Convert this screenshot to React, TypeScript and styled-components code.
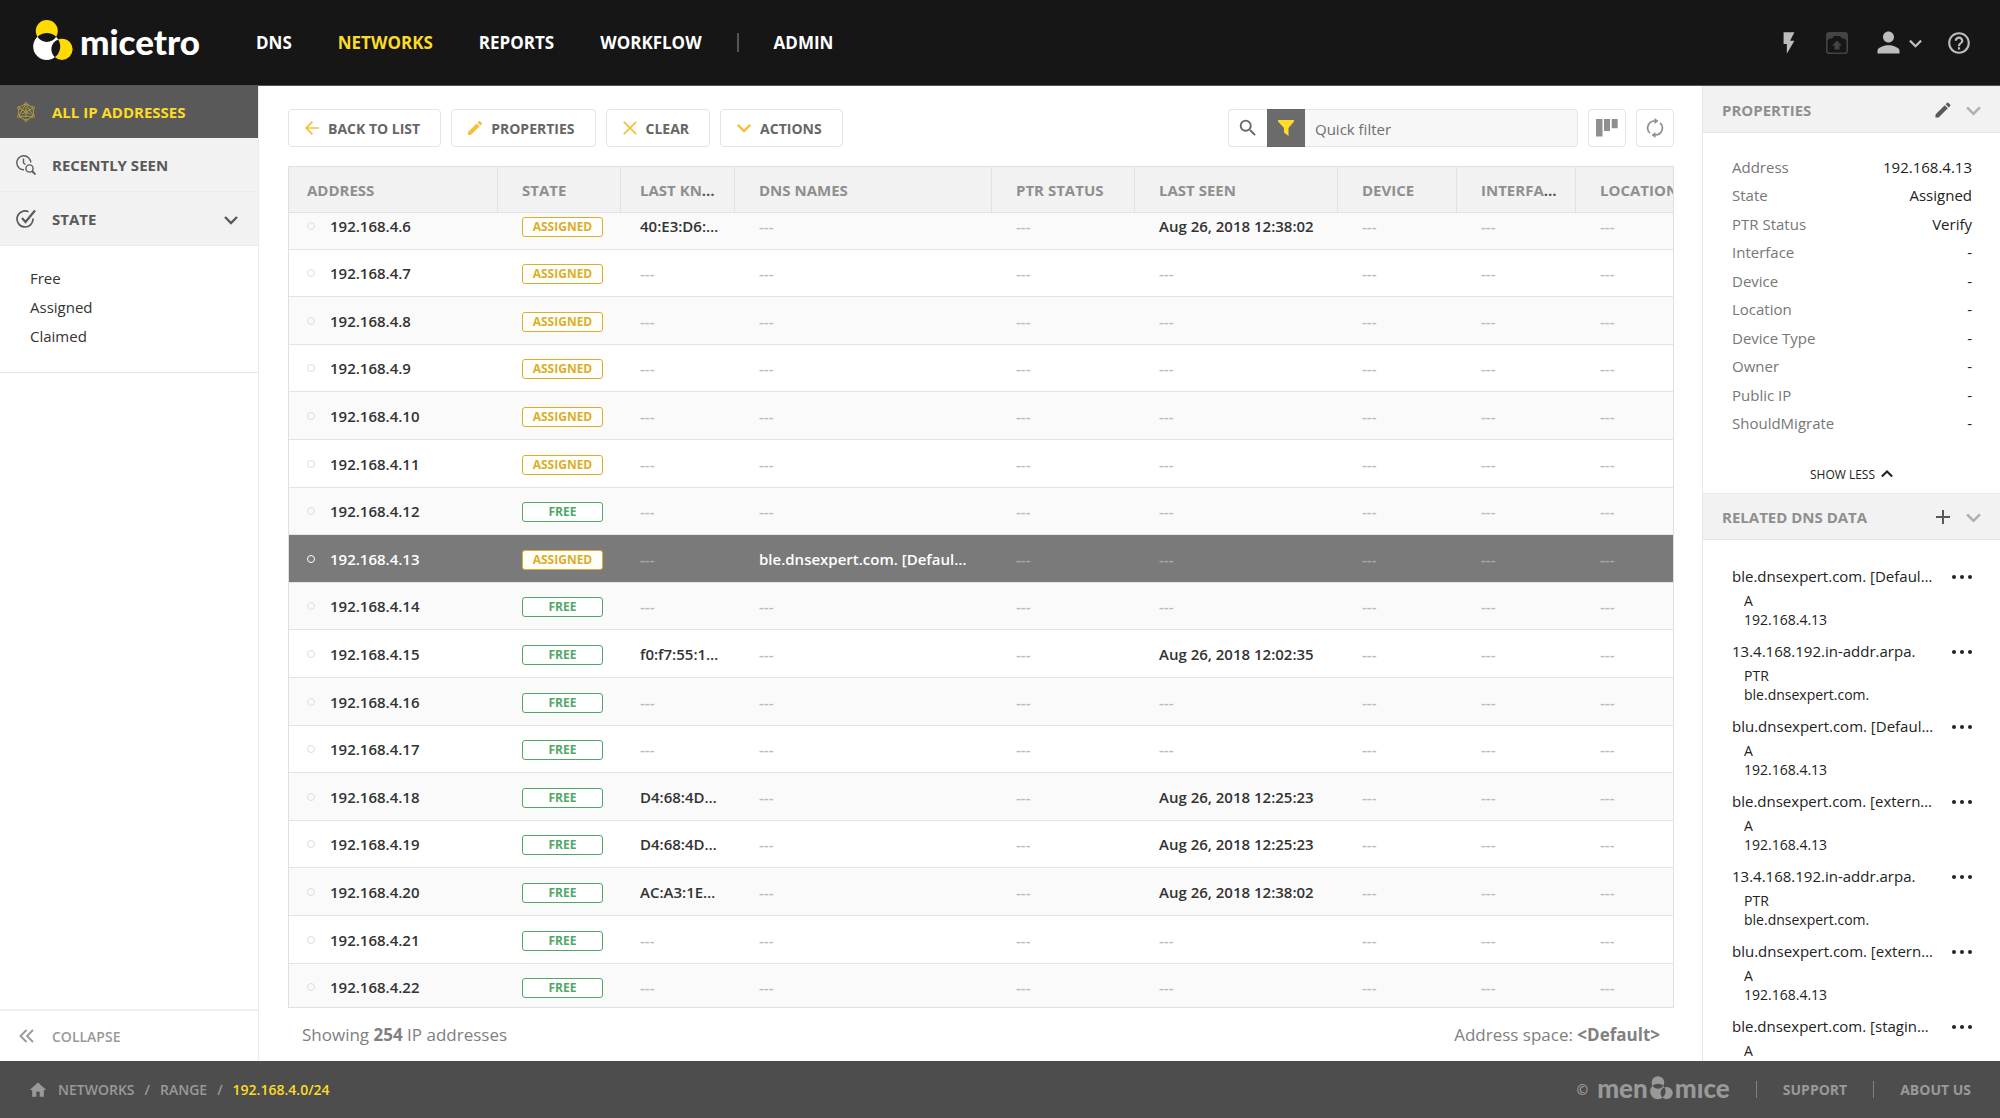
import React, { useLayoutEffect, useRef } from "react";
import styled, { createGlobalStyle, css } from "styled-components";
import { MdFlashOn, MdPerson, MdHelpOutline, MdEdit, MdHome, MdSearch, MdAdd } from "react-icons/md";

const Global = createGlobalStyle`
  * { box-sizing: border-box; }
  body { margin: 0; background: #fff; font-family: "Open Sans", "Noto Sans", sans-serif; font-size: 16px; color: #333; }
  button, input { font: inherit; color: inherit; }
  button { background: none; border: 0; padding: 0; cursor: pointer; }
  a { color: inherit; text-decoration: none; }
  ul, dl, dd { margin: 0; padding: 0; list-style: none; }
  h2 { margin: 0; }
  svg { display: block; flex: none; }
`;

const Page = styled.div`
  display: flex;
  flex-direction: column;
  height: 100vh;
`;

/* ---------- top bar ---------- */
const TopBar = styled.header`
  flex: none;
  display: flex;
  align-items: center;
  height: 86px;
  padding: 0 28px 0 33px;
  background: #161616;
  border-bottom: 1px solid #555;
  color: #fff;
`;
const Brand = styled.a`
  display: flex;
  align-items: center;
  gap: 7px;
  width: 223px;
  padding-bottom: 4px;
  font-family: "Lato", sans-serif;
  font-weight: 900;
  font-size: 35px;
  line-height: 40px;
`;
const Nav = styled.nav`
  flex: 1;
  display: flex;
  align-items: center;
  gap: 46px;
  font-size: 17px;
  font-weight: 700;
`;
const NavLink = styled.a<{ $on?: boolean }>`
  color: ${(p) => (p.$on ? "#fddb26" : "#fff")};
`;
const NavGroup = styled.div`
  display: flex;
  align-items: center;
  gap: 35px;
`;
const NavRule = styled.span`
  width: 2px;
  height: 19px;
  background: #555;
`;
const Tools = styled.div`
  display: flex;
  align-items: center;
  gap: 24px;
  color: #bdbdbd;
`;
const Tool = styled.button`
  display: flex;
  align-items: center;
  justify-content: center;
  gap: 4px;
  height: 40px;
`;

/* ---------- middle ---------- */
const Middle = styled.div`
  flex: 1;
  min-height: 0;
  display: grid;
  grid-template-columns: 259px minmax(0, 1fr) 298px;
`;
const Sidebar = styled.aside`
  display: flex;
  flex-direction: column;
  border-right: 1px solid #ebebeb;
`;
const SideItem = styled.button<{ $on?: boolean }>`
  display: flex;
  align-items: center;
  gap: 16px;
  height: 54px;
  padding: 0 20px 0 16px;
  border-bottom: 1px solid #ebebeb;
  background: #f2f2f2;
  color: #595959;
  font-size: 15px;
  font-weight: 700;
  text-align: left;
  ${(p) =>
    p.$on &&
    css`
      height: 52px;
      border-bottom: 0;
      background: #595959;
      color: #fddb26;
    `}
`;
const SideLabel = styled.span`
  flex: 1;
`;
const StateList = styled.ul`
  padding: 18px 30px 21px;
  border-bottom: 1px solid #e6e6e6;
  font-size: 15px;
  line-height: 29px;
`;
const Collapse = styled.button`
  display: flex;
  align-items: center;
  gap: 18px;
  height: 52px;
  margin-top: auto;
  padding: 0 19px;
  border-top: 2px solid #f0f0f0;
  color: #999;
  font-size: 14px;
  font-weight: 600;
`;

const Main = styled.main`
  display: flex;
  flex-direction: column;
  min-width: 0;
  min-height: 0;
  padding: 23px 28px 0 29px;
`;
const Toolbar = styled.div`
  display: flex;
  gap: 10px;
  margin-bottom: 19px;
`;
const ToolButton = styled.button`
  display: flex;
  align-items: center;
  gap: 9px;
  height: 38px;
  padding: 0 20px 0 16px;
  border: 1px solid #e4e4e4;
  border-radius: 4px;
  color: #666;
  font-size: 14px;
  font-weight: 700;
`;
const Search = styled.div`
  display: flex;
  width: 350px;
  height: 38px;
  margin-left: auto;
  border: 1px solid #e4e4e4;
  border-radius: 4px;
  background: #f7f7f7;
`;
const SearchButton = styled.button<{ $on?: boolean }>`
  display: flex;
  align-items: center;
  justify-content: center;
  width: 38px;
  margin: -1px 0;
  border: 1px solid ${(p) => (p.$on ? "#666" : "#e4e4e4")};
  background: ${(p) => (p.$on ? "#6b6b6b" : "#fff")};
  border-width: 1px 0;
  border-radius: ${(p) => (p.$on ? "0" : "4px 0 0 4px")};
  color: #666;
`;
const SearchInput = styled.input`
  flex: 1;
  min-width: 0;
  padding: 1px 10px 0;
  border: 0;
  outline: 0;
  background: transparent;
  font-size: 15px;
  &::placeholder { color: #6f6f6f; opacity: 1; }
`;
const SquareButton = styled.button`
  display: flex;
  align-items: center;
  justify-content: center;
  width: 38px;
  height: 38px;
  border: 1px solid #e4e4e4;
  border-radius: 4px;
`;

const Scroller = styled.div`
  flex: 1;
  min-height: 0;
  overflow: auto;
  scrollbar-width: none;
  border: 1px solid #e0e0e0;
`;
const Table = styled.table`
  width: 100%;
  min-width: 1430px;
  table-layout: fixed;
  border-collapse: separate;
  border-spacing: 0;
`;
const Col = styled.col<{ $w: number }>`
  width: ${(p) => p.$w}px;
`;
const Th = styled.th<{ $l?: number }>`
  position: sticky;
  top: 0;
  z-index: 1;
  height: 46px;
  padding: 0 16px 0 ${(p) => p.$l ?? 24}px;
  overflow: hidden;
  text-overflow: ellipsis;
  white-space: nowrap;
  text-align: left;
  background: #f2f2f2;
  border-right: 1px solid #e2e2e2;
  border-bottom: 1px solid #e2e2e2;
  color: #555;
  font-size: 15px;
  font-weight: 700;
`;
const ThText = styled.span`
  color: #8f8f8f;
`;
const Row = styled.tr<{ $sel?: boolean }>`
  height: 48px;
  background: #fff;
  color: #333;
  &:nth-child(5n + 2), &:nth-child(5n + 4) { height: 47px; }
  &:nth-child(odd) { background: #fafafa; }
  ${(p) =>
    p.$sel &&
    css`
      && { background: #7a7a7a; color: #fff; }
    `}
`;
const Td = styled.td<{ $l?: number; $r?: number }>`
  padding: 0 ${(p) => p.$r ?? 16}px 0 ${(p) => p.$l ?? 24}px;
  overflow: hidden;
  text-overflow: ellipsis;
  white-space: nowrap;
  border-bottom: 1px solid #e4e4e4;
  font-size: 15px;
  font-weight: 600;
`;
const AddressCell = styled.div`
  display: flex;
  align-items: center;
  gap: 15px;
`;
const Radio = styled.input<{ $sel?: boolean }>`
  appearance: none;
  flex: none;
  width: 8px;
  height: 8px;
  margin: 0;
  border: 1px solid ${(p) => (p.$sel ? "#fff" : "#ddd")};
  border-radius: 50%;
`;
const Dash = styled.span<{ $sel?: boolean }>`
  color: ${(p) => (p.$sel ? "#aaa" : "#bbb")};
`;
const Badge = styled.span<{ $free?: boolean }>`
  display: block;
  width: 81px;
  margin-top: 2px;
  border: 1px solid;
  border-radius: 3px;
  background: #fff;
  color: ${(p) => (p.$free ? "#51a866" : "#deae22")};
  font-size: 12px;
  font-weight: 700;
  line-height: 18px;
  text-align: center;
`;
const Status = styled.div`
  display: flex;
  justify-content: space-between;
  height: 53px;
  padding: 0 14px;
  color: #808080;
  font-size: 17px;
  line-height: 54px;
`;

/* ---------- right panel ---------- */
const Panel = styled.aside`
  min-height: 0;
  overflow: hidden;
  border-left: 1px solid #e6e6e6;
`;
const PanelHead = styled.div`
  display: flex;
  align-items: center;
  height: 47px;
  padding: 0 12px 0 19px;
  background: #f2f2f2;
  border-top: 1px solid #ebebeb;
  border-bottom: 1px solid #e6e6e6;
`;
const PanelTitle = styled.h2`
  flex: 1;
  font-size: 15px;
  font-weight: 700;
  color: #8f8f8f;
`;
const IconButton = styled.button<{ $faint?: boolean }>`
  display: flex;
  align-items: center;
  justify-content: center;
  width: 30px;
  height: 30px;
  color: ${(p) => (p.$faint ? "#b0b0b0" : "#595959")};
`;
const Props = styled.dl`
  padding: 19px 28px 0 29px;
`;
const Prop = styled.div`
  display: flex;
  align-items: center;
  justify-content: space-between;
  height: 28px;
  font-size: 15px;
  &:nth-child(odd) { height: 29px; }
`;
const PropName = styled.dt`
  color: #777;
`;
const PropValue = styled.dd`
  color: #222;
`;
const ShowLess = styled.button`
  display: flex;
  align-items: center;
  justify-content: center;
  gap: 6px;
  width: 100%;
  height: 56px;
  padding-top: 18px;
  font-size: 12px;
  color: #222;
`;
const Records = styled.ul`
  padding: 22px 28px 0 29px;
`;
const Record = styled.li`
  height: 75px;
  color: #222;
`;
const RecordHead = styled.div`
  display: flex;
  align-items: center;
  justify-content: space-between;
  height: 27px;
  font-size: 15px;
`;
const RecordName = styled.span`
  width: 204px;
  overflow: hidden;
  text-overflow: ellipsis;
  white-space: nowrap;
`;
const RecordMenu = styled.button`
  padding-top: 3px;
`;
const RecordBody = styled.div`
  padding-left: 12px;
  padding-top: 2px;
  font-size: 14px;
  line-height: 19px;
`;

/* ---------- footer ---------- */
const Footer = styled.footer`
  flex: none;
  display: flex;
  align-items: center;
  justify-content: space-between;
  height: 57px;
  padding: 0 29px 0 28px;
  background: #4d4d4d;
  color: #999;
  font-size: 14px;
  font-weight: 600;
`;
const Crumbs = styled.nav`
  display: flex;
  align-items: center;
  gap: 10px;
`;
const Crumb = styled.a<{ $on?: boolean }>`
  color: ${(p) => (p.$on ? "#fddb26" : "#999")};
`;
const FootLinks = styled.div`
  display: flex;
  align-items: center;
  gap: 26px;
  font-weight: 700;
`;
const FootRule = styled.span`
  width: 1px;
  height: 17px;
  background: #808080;
`;
const Maker = styled.span`
  display: flex;
  align-items: center;
  gap: 9px;
`;
const MakerName = styled.span`
  display: flex;
  align-items: center;
  gap: 2px;
  padding-bottom: 4px;
  font-family: "Lato", sans-serif;
  font-size: 26px;
  font-weight: 900;
  line-height: 28px;
`;

/* ---------- drawings ---------- */
const Chevron = ({ w = 14, up = false }: { w?: number; up?: boolean }) => (
  <svg width={w} height={w} viewBox="0 0 14 14" fill="none" stroke="currentColor" strokeWidth="2.400">
    <path d={up ? "M1 10l6-6 6 6" : "M1 5l6 6 6-6"} />
  </svg>
);
type MarkProps = { w: number; h: number; outer: string; inner: string; gap: string };
const CirclesMark = ({ w, h, outer, inner, gap }: MarkProps) => (
  <svg width={w} height={h} viewBox="0 0 40 41">
    <circle cx="13.800" cy="11" r="11" fill={outer} />
    <circle cx="29" cy="29.300" r="10.600" fill={outer} />
    <circle cx="13.700" cy="26.500" r="13.500" fill={inner} />
    <path d="M4.500 16.800A13.500 13.500 0 0 1 23.200 16.800A11 11 0 0 1 4.500 16.800Z" fill={gap} />
    <path d="M25.200 19.400A13.500 13.500 0 0 1 21.900 37.200A10.600 10.600 0 0 1 25.200 19.400Z" fill={gap} />
  </svg>
);
const NetIcon = () => (
  <svg width="20" height="20" viewBox="0 0 20 20" fill="none" stroke="#d9b92c" strokeWidth=".7">
    <path d="M10 1.500l7.300 4.200v8.600L10 18.500l-7.300-4.200V5.700zM10 1.500l7.300 12.800H2.700zM10 5v10M2.700 5.700L10 10l7.300-4.300M6 12l4-2 4 2" />
    <g fill="#595959">
      <circle cx="10" cy="1.800" r="1.200" /><circle cx="17.300" cy="5.700" r="1.200" /><circle cx="17.300" cy="14.300" r="1.200" />
      <circle cx="10" cy="18.200" r="1.200" /><circle cx="2.700" cy="14.300" r="1.200" /><circle cx="2.700" cy="5.700" r="1.200" />
      <circle cx="10" cy="10" r="1.200" />
    </g>
  </svg>
);
const RecentIcon = () => (
  <svg width="20" height="20" viewBox="0 0 20 20" fill="none" stroke="currentColor" strokeWidth="1.400">
    <path d="M8 14.800A7 7 0 1 1 14.800 7.500M7.500 3.500v4.500l2 1.500" />
    <circle cx="13.500" cy="13.500" r="3.600" />
    <path d="M16 16l3.500 3.500" strokeWidth="1.800" />
  </svg>
);
const StateIcon = () => (
  <svg width="20" height="20" viewBox="0 0 20 20" fill="none" stroke="currentColor" strokeWidth="1.700">
    <path d="M12.500 2.800A8 8 0 1 0 17 9.500" />
    <path d="M6 9l3.500 4L19 1.500" strokeWidth="2.200" />
  </svg>
);
const BackIcon = () => (
  <svg width="14" height="14" viewBox="0 0 14 14" fill="none" stroke="#f5bf37" strokeWidth="1.700">
    <path d="M14 7H1M7.500 .7L1.200 7l6.300 6.300" />
  </svg>
);
const PencilIcon = () => (
  <svg width="14" height="14" viewBox="3 3 18 18" fill="#f5bf37">
    <path d="M3 17.250V21h3.750L17.810 9.940l-3.750-3.750L3 17.250zM20.710 7.040a1 1 0 0 0 0-1.410l-2.340-2.340a1 1 0 0 0-1.410 0l-1.830 1.830 3.750 3.750 1.830-1.830z" />
  </svg>
);
const ClearIcon = () => (
  <svg width="14" height="14" viewBox="0 0 14 14" fill="none" stroke="#f5bf37" strokeWidth="1.700">
    <path d="M.8 .8l12.400 12.400M13.200 .8L.8 13.200" />
  </svg>
);
const ActionsIcon = () => (
  <svg width="14" height="14" viewBox="0 0 14 14" fill="none" stroke="#f5bf37" strokeWidth="2.400">
    <path d="M.8 3.800L7 10l6.200-6.200" />
  </svg>
);
const FunnelIcon = () => (
  <svg width="16" height="16" viewBox="0 0 16 16" fill="#fddb26">
    <path d="M0 0h16v1.500L10.500 8v8L6 12.500V8L0 1.500z" />
  </svg>
);
const ColumnsIcon = () => (
  <svg width="22" height="18" viewBox="0 0 22 18" fill="#8f8f8f">
    <path d="M0 0h6.500v17.500H0zM8 0h6v12H8zM15.700 0h6v9.300h-6z" />
  </svg>
);
const RefreshIcon = () => (
  <svg width="18" height="20" viewBox="0 0 18 20" fill="none" stroke="#8f8f8f" strokeWidth="1.700">
    <path d="M4 15.200A7 7 0 0 1 9 3M14 4.800A7 7 0 0 1 9 17" />
    <path d="M8.500 0l4 3-4 3zM9.500 14l-4 3 4 3z" fill="#8f8f8f" stroke="none" />
  </svg>
);
const VaultIcon = () => (
  <svg width="22" height="22" viewBox="0 0 22 22">
    <rect x=".8" y=".8" width="20.400" height="20.400" rx="2.500" fill="none" stroke="#444" strokeWidth="1.600" />
    <path d="M1 1h20v8l-2.500-2.500H16L14 4H8L6 6.500H3.500L1 9z" fill="#444" />
    <path d="M11 8.500l5 5h-2.500v4h-5v-4H6z" fill="#444" />
  </svg>
);
const DoubleLeft = () => (
  <svg width="15" height="14" viewBox="0 0 15 14" fill="none" stroke="currentColor" strokeWidth="1.900">
    <path d="M7.500 1l-6 6 6 6M14 1L8 7l6 6" />
  </svg>
);
const Dots = () => (
  <svg width="20" height="4" viewBox="0 0 20 4" fill="#222">
    <circle cx="2" cy="2" r="2" /><circle cx="10" cy="2" r="2" /><circle cx="18" cy="2" r="2" />
  </svg>
);

/* ---------- data ---------- */
type Entry = { ip: string; free?: boolean; mac?: string; seen?: string; dns?: string };
const entries: Entry[] = [
  { ip: "192.168.4.6", mac: "40:E3:D6:1A:5B:0C", seen: "Aug 26, 2018 12:38:02" },
  { ip: "192.168.4.7" },
  { ip: "192.168.4.8" },
  { ip: "192.168.4.9" },
  { ip: "192.168.4.10" },
  { ip: "192.168.4.11" },
  { ip: "192.168.4.12", free: true },
  { ip: "192.168.4.13", dns: "ble.dnsexpert.com. [Default], blu.dnsexpert.com. [Default]" },
  { ip: "192.168.4.14", free: true },
  { ip: "192.168.4.15", free: true, mac: "f0:f7:55:1c:22:40", seen: "Aug 26, 2018 12:02:35" },
  { ip: "192.168.4.16", free: true },
  { ip: "192.168.4.17", free: true },
  { ip: "192.168.4.18", free: true, mac: "D4:68:4D:01:7A:10", seen: "Aug 26, 2018 12:25:23" },
  { ip: "192.168.4.19", free: true, mac: "D4:68:4D:02:7A:30", seen: "Aug 26, 2018 12:25:23" },
  { ip: "192.168.4.20", free: true, mac: "AC:A3:1E:C5:20:01", seen: "Aug 26, 2018 12:38:02" },
  { ip: "192.168.4.21", free: true },
  { ip: "192.168.4.22", free: true },
];
const columns: { title: string; w: number; l?: number }[] = [
  { title: "ADDRESS", w: 209, l: 18 },
  { title: "STATE", w: 123 },
  { title: "LAST KNOWN CLIENT ID", w: 114, l: 19 },
  { title: "DNS NAMES", w: 257 },
  { title: "PTR STATUS", w: 143 },
  { title: "LAST SEEN", w: 203 },
  { title: "DEVICE", w: 119 },
  { title: "INTERFACE", w: 119 },
  { title: "LOCATION", w: 143 },
];
const properties = [
  ["Address", "192.168.4.13"],
  ["State", "Assigned"],
  ["PTR Status", "Verify"],
  ["Interface", "-"],
  ["Device", "-"],
  ["Location", "-"],
  ["Device Type", "-"],
  ["Owner", "-"],
  ["Public IP", "-"],
  ["ShouldMigrate", "-"],
];
const records = [
  ["ble.dnsexpert.com. [Default view]", "A", "192.168.4.13"],
  ["13.4.168.192.in-addr.arpa.", "PTR", "ble.dnsexpert.com."],
  ["blu.dnsexpert.com. [Default view]", "A", "192.168.4.13"],
  ["ble.dnsexpert.com. [external view]", "A", "192.168.4.13"],
  ["13.4.168.192.in-addr.arpa.", "PTR", "ble.dnsexpert.com."],
  ["blu.dnsexpert.com. [external view]", "A", "192.168.4.13"],
  ["ble.dnsexpert.com. [staging view]", "A", "192.168.4.13"],
];

export default function App() {
  const scroller = useRef<HTMLDivElement>(null);
  useLayoutEffect(() => {
    if (scroller.current) scroller.current.scrollTop = 11;
  }, []);
  const val = (v: string | undefined, sel: boolean) => (v ? v : <Dash $sel={sel}>---</Dash>);
  return (
    <Page>
      <Global />
      <TopBar>
        <Brand href="#">
          <CirclesMark w={40} h={41} outer="#ffdb00" inner="#fff" gap="#161616" />
          micetro
        </Brand>
        <Nav>
          <NavLink href="#">DNS</NavLink>
          <NavLink href="#" $on>NETWORKS</NavLink>
          <NavLink href="#">REPORTS</NavLink>
          <NavGroup>
            <NavLink href="#">WORKFLOW</NavLink>
            <NavRule />
            <NavLink href="#">ADMIN</NavLink>
          </NavGroup>
        </Nav>
        <Tools>
          <Tool aria-label="Quick command"><MdFlashOn size={26} /></Tool>
          <Tool aria-label="Backup"><VaultIcon /></Tool>
          <Tool aria-label="User"><MdPerson size={33} /><Chevron w={13} /></Tool>
          <Tool aria-label="Help"><MdHelpOutline size={26} /></Tool>
        </Tools>
      </TopBar>
      <Middle>
        <Sidebar>
          <SideItem $on><NetIcon /><SideLabel>ALL IP ADDRESSES</SideLabel></SideItem>
          <SideItem><RecentIcon /><SideLabel>RECENTLY SEEN</SideLabel></SideItem>
          <SideItem><StateIcon /><SideLabel>STATE</SideLabel><Chevron /></SideItem>
          <StateList>
            <li><a href="#">Free</a></li>
            <li><a href="#">Assigned</a></li>
            <li><a href="#">Claimed</a></li>
          </StateList>
          <Collapse><DoubleLeft />COLLAPSE</Collapse>
        </Sidebar>
        <Main>
          <Toolbar>
            <ToolButton><BackIcon />BACK TO LIST</ToolButton>
            <ToolButton><PencilIcon />PROPERTIES</ToolButton>
            <ToolButton><ClearIcon />CLEAR</ToolButton>
            <ToolButton><ActionsIcon />ACTIONS</ToolButton>
            <Search>
              <SearchButton aria-label="Search"><MdSearch size={22} /></SearchButton>
              <SearchButton $on aria-label="Filter"><FunnelIcon /></SearchButton>
              <SearchInput aria-label="Quick filter" placeholder="Quick filter" />
            </Search>
            <SquareButton aria-label="Columns"><ColumnsIcon /></SquareButton>
            <SquareButton aria-label="Refresh"><RefreshIcon /></SquareButton>
          </Toolbar>
          <Scroller ref={scroller}>
            <Table>
              <colgroup>{columns.map((c) => <Col key={c.title} $w={c.w} />)}</colgroup>
              <thead>
                <tr>{columns.map((c) => <Th key={c.title} $l={c.l}><ThText>{c.title}</ThText></Th>)}</tr>
              </thead>
              <tbody>
                {entries.map((e) => {
                  const sel = e.ip === "192.168.4.13";
                  return (
                    <Row key={e.ip} $sel={sel}>
                      <Td $l={18}>
                        <AddressCell>
                          <Radio type="radio" name="address" aria-label={e.ip} $sel={sel} defaultChecked={sel} />
                          {e.ip}
                        </AddressCell>
                      </Td>
                      <Td><Badge $free={e.free}>{e.free ? "FREE" : "ASSIGNED"}</Badge></Td>
                      <Td $l={19}>{val(e.mac, sel)}</Td>
                      <Td $r={24}>{val(e.dns, sel)}</Td>
                      <Td>{val(undefined, sel)}</Td>
                      <Td>{val(e.seen, sel)}</Td>
                      <Td>{val(undefined, sel)}</Td>
                      <Td>{val(undefined, sel)}</Td>
                      <Td>{val(undefined, sel)}</Td>
                    </Row>
                  );
                })}
              </tbody>
            </Table>
          </Scroller>
          <Status>
            <span>Showing <b>254</b> IP addresses</span>
            <span>Address space: <b>&lt;Default&gt;</b></span>
          </Status>
        </Main>
        <Panel>
          <PanelHead>
            <PanelTitle>PROPERTIES</PanelTitle>
            <IconButton aria-label="Edit"><MdEdit size={20} /></IconButton>
            <IconButton $faint aria-label="Fold"><Chevron w={15} /></IconButton>
          </PanelHead>
          <Props>
            {properties.map(([k, v]) => <Prop key={k}><PropName>{k}</PropName><PropValue>{v}</PropValue></Prop>)}
          </Props>
          <ShowLess>SHOW LESS <Chevron w={12} up /></ShowLess>
          <PanelHead>
            <PanelTitle>RELATED DNS DATA</PanelTitle>
            <IconButton aria-label="Add"><MdAdd size={24} /></IconButton>
            <IconButton $faint aria-label="Fold"><Chevron w={15} /></IconButton>
          </PanelHead>
          <Records>
            {records.map(([name, type, data], i) => (
              <Record key={i}>
                <RecordHead><RecordName>{name}</RecordName><RecordMenu aria-label="More"><Dots /></RecordMenu></RecordHead>
                <RecordBody><div>{type}</div><div>{data}</div></RecordBody>
              </Record>
            ))}
          </Records>
        </Panel>
      </Middle>
      <Footer>
        <Crumbs>
          <MdHome size={20} />
          <Crumb href="#">NETWORKS</Crumb><span>/</span>
          <Crumb href="#">RANGE</Crumb><span>/</span>
          <Crumb href="#" $on>192.168.4.0/24</Crumb>
        </Crumbs>
        <FootLinks>
          <Maker>
            ©
            <MakerName>
              men
              <CirclesMark w={23} h={24} outer="#999" inner="#999" gap="#4d4d4d" />
              mıce
            </MakerName>
          </Maker>
          <FootRule />
          <a href="#">SUPPORT</a>
          <FootRule />
          <a href="#">ABOUT US</a>
        </FootLinks>
      </Footer>
    </Page>
  );
}
